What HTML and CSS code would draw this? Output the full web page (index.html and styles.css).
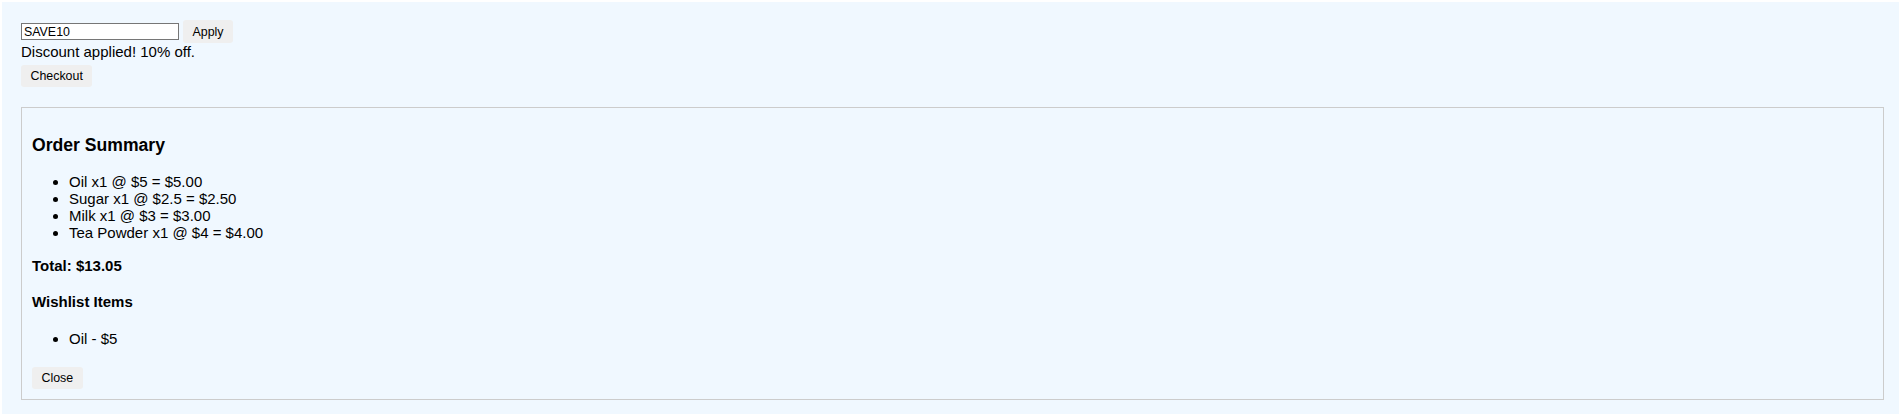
FILE: index.html
```html
<!DOCTYPE html>
<html lang="en">
<head>
<meta charset="utf-8">
<title>Cart</title>
<link rel="stylesheet" href="styles.css">
</head>
<body>
<div class="app">
  <div class="coupon-row">
    <input class="coupon-input" type="text" value="SAVE10">
    <button class="btn">Apply</button>
  </div>
  <div class="message">Discount applied! 10% off.</div>
  <button class="btn checkout">Checkout</button>
  <div class="summary">
    <h3 class="summary-title">Order Summary</h3>
    <ul class="list">
      <li>Oil x1 @ $5 = $5.00</li>
      <li>Sugar x1 @ $2.5 = $2.50</li>
      <li>Milk x1 @ $3 = $3.00</li>
      <li>Tea Powder x1 @ $4 = $4.00</li>
    </ul>
    <p class="total"><strong>Total: $13.05</strong></p>
    <h4 class="wish-title">Wishlist Items</h4>
    <ul class="list">
      <li>Oil - $5</li>
    </ul>
    <button class="btn close">Close</button>
  </div>
</div>
</body>
</html>
```

FILE: styles.css
```css
html, body {
  margin: 0;
  padding: 0;
  background: #ffffff;
}

body {
  font-family: "Liberation Sans", Arial, sans-serif;
  font-size: 15px;
  line-height: 17px;
  color: #000;
}

.app {
  margin: 2px;
  padding: 18px 15px 14px 19px;
  background: #f0f8ff;
}

.coupon-row {
  display: flex;
  align-items: center;
  gap: 4px;
  height: 23px;
}

.coupon-input {
  box-sizing: border-box;
  width: 158px;
  height: 17px;
  margin: 0;
  padding: 1px 2px;
  border: 1px solid #767676;
  border-radius: 0;
  font-family: "Liberation Sans", Arial, sans-serif;
  font-size: 12.4px;
  line-height: 14px;
  color: #000;
  background: #fff;
  outline: none;
}

.btn {
  box-sizing: border-box;
  margin: 0;
  height: 22px;
  padding: 0 9.5px;
  border: none;
  border-radius: 3px;
  background: #efefef;
  font-family: "Liberation Sans", Arial, sans-serif;
  font-size: 12.4px;
  line-height: 14px;
  color: #000;
}

.coupon-row .btn {
  height: 23px;
}

.message {
  line-height: 17px;
  height: 17px;
}

.checkout {
  display: block;
  margin-top: 5px;
}

.summary {
  margin-top: 20px;
  border: 1px solid #cccccc;
  padding: 10px;
}

.summary-title {
  font-size: 17.6px;
  line-height: 20px;
  font-weight: bold;
  margin: 17.3px 0;
}

.list {
  margin: 14.8px 0;
  padding-left: 37px;
}

.list li {
  line-height: 17px;
}

.total {
  margin: 16px 0 14.8px;
}

.wish-title {
  font-size: 15px;
  line-height: 17px;
  font-weight: bold;
  margin: 19.7px 0;
}

.close {
  display: block;
  margin-top: 20.5px;
}
```
